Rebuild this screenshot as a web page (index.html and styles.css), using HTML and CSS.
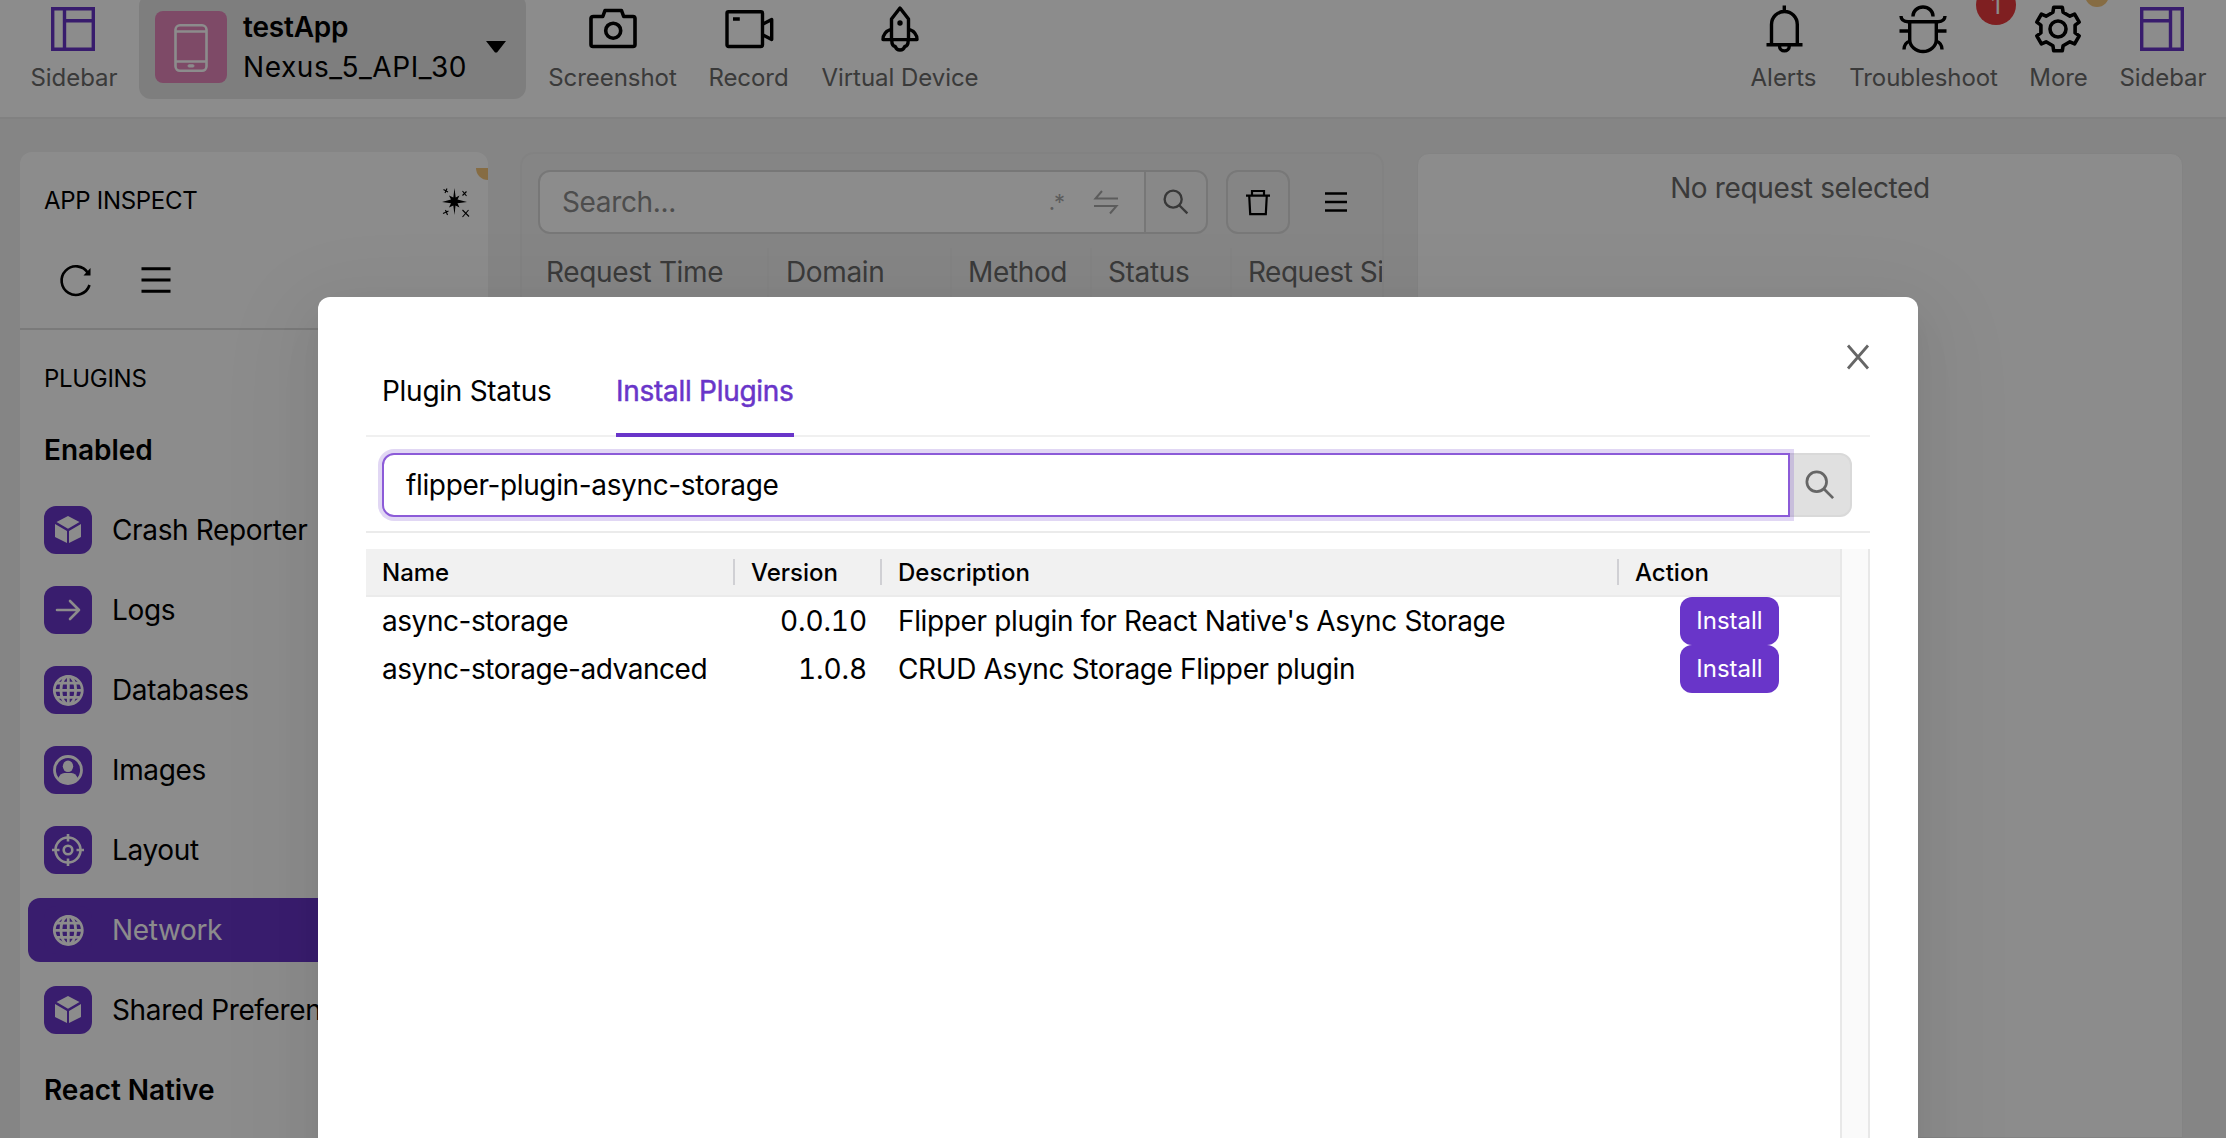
FILE: index.html
```html
<!DOCTYPE html>
<html lang="en">
<head>
<meta charset="utf-8">
<title>Flipper</title>
<link rel="stylesheet" href="styles.css">
</head>
<body>
<svg class="defs" width="0" height="0">
  <symbol id="globe" viewBox="0 0 48 48"><g fill="none" stroke="#fff" stroke-width="2.8"><circle cx="24.3" cy="24.3" r="14"/><ellipse cx="24.3" cy="24.3" rx="7.4" ry="14"/><path d="M24.3 10.500v28M10.500 24.300h28M13 17.200h22.600M13 31.400h22.600"/></g></symbol>
  <symbol id="cube" viewBox="0 0 48 48"><path fill="#fff" d="M24 10l11.500 6L24 22.800 12.500 16zM11 18l12 7v12l-12-6zM37 18l-12 7v12l12-6z"/></symbol>
  <symbol id="glass" viewBox="0 0 32 32"><g fill="none" stroke="#666" stroke-width="2.900"><circle cx="12.500" cy="12.500" r="10.500"/><path d="M20 20l10 10"/></g></symbol>
</svg>
<div class="app">
  <header class="toolbar">
    <div class="tool side"><svg viewBox="0 0 48 48" fill="none" stroke="#6733c6" stroke-width="3.400"><path d="M3.700 3.700h40.600v40.600H3.700zM15.500 3.700v40.600M15.500 15.700h28.800"/></svg><span>Sidebar</span></div>
    <div class="device">
      <div class="device-icon"><svg viewBox="0 0 72 72" fill="none" stroke="#fff" stroke-width="2.600"><rect x="20.500" y="14.300" width="31" height="45.500" rx="4.500"/><path d="M21 20.500h30M21 50.500h30"/><rect x="33" y="53.800" width="6" height="2.200" rx="1" fill="#fff" stroke-width="1"/></svg></div>
      <div class="device-text"><b>testApp</b><span>Nexus_5_API_30</span></div>
      <svg class="caret" viewBox="0 0 20 12"><path d="M0 0h20L11 11.500h-2z"/></svg>
    </div>
    <div class="tool shot"><svg viewBox="0 0 48 48" fill="none" stroke="#000" stroke-width="3.600" stroke-linejoin="round"><path d="M4.500 11.500h9.300l2.200-6h16.500l2.200 6H44q2 0 2 2v26q0 2-2 2H4q-2 0-2-2v-26q0-2 2.500-2z"/><circle cx="24.200" cy="25.700" r="7.500"/></svg><span>Screenshot</span></div>
    <div class="tool rec"><svg viewBox="0 0 48 48" fill="none" stroke="#000" stroke-width="3.400" stroke-linejoin="round"><rect x="2" y="6.700" width="35.500" height="34.800" rx="1.500"/><path d="M8 14h6.800M38 19l8.700-4.500v20L38 30"/></svg><span>Record</span></div>
    <div class="tool virt"><svg viewBox="0 0 48 48" fill="none" stroke="#000" stroke-width="3.400" stroke-linejoin="round"><path d="M24 3l8.500 11v20.600h-17V14zM15.500 24Q7 27 7 34.600h34Q41 27 32.500 24M15.800 35.500q0 5.500 3.500 6 1 3.500 4.700 3.500t4.700-3.500q3.500-.5 3.500-6"/><circle cx="24" cy="18" r="2.700" fill="#000" stroke="none"/></svg><span>Virtual Device</span></div>
    <div class="grow"></div>
    <div class="tool alert"><svg viewBox="0 0 48 48" fill="none" stroke="#000" stroke-width="3.400"><path d="M24.300 0.500v6M11.500 39V19.500a12.900 13 0 0 1 25.800 0V39M6.500 39.700h36M19.500 41a4.900 4.900 0 0 0 9.800 0"/></svg><span>Alerts</span></div>
    <div class="tool bug"><svg viewBox="0 0 48 48" fill="none" stroke="#000" stroke-width="3.400"><path d="M14 11.500V11a10 9 0 0 1 20 0v.5M8 16.700h32M2 11q.2 5.500 7 5.700M46 11q-.2 5.500-7 5.700M10.700 17v17.500a13.300 12 0 0 0 26.600 0V17M.5 26h9M38.500 26h9M11 36q-6 2-6 8.500M37 36q6 2 6 8.500"/></svg><span>Troubleshoot</span><i class="badge">1</i></div>
    <div class="tool more"><svg viewBox="0 0 48 48" fill="none" stroke="#000" stroke-width="3.600" stroke-linejoin="round"><path d="M18.900 7.300L19.700 2.200H28.300L29.100 7.300 35.900 11.200 40.600 9.100 45.200 17.100 41.100 20.100V27.900L45.200 30.900 40.600 38.900 35.900 36.800 29.100 40.700 28.300 45.800H19.700L18.900 40.700 12.100 36.800 7.400 38.900 2.800 30.900 6.900 27.900V20.100L2.800 17.100 7.400 9.100 12.100 11.200z"/><circle cx="24" cy="24" r="8"/></svg><span>More</span><i class="dot"></i></div>
    <div class="tool side"><svg viewBox="0 0 48 48" fill="none" stroke="#6733c6" stroke-width="3.400"><path d="M3.700 3.700h40.600v40.600H3.700zM32.500 3.700v40.600M32.500 15.700H3.700"/></svg><span>Sidebar</span></div>
  </header>
  <main class="main">
    <aside class="panel nav">
      <div class="nav-top">
        <div class="nav-title"><span>APP INSPECT</span>
          <svg class="spark" viewBox="0 0 28 30"><path d="M12.500 0l1.200 9.500 3.800-2-2 4L25 14l-9.500 1.200 2 4.300-4-2-1 9.500-1.200-9.500-4.300 2 2-4.300L0 14l9-2.500-2-4 4.300 2z"/><path d="M1.500 1.500l4.500 2.500M5 .5L3 5M20.500 3l4 5M24.500 3.500L20.500 7.500M1 25.500l5.500-2.500M3.500 22l2 5M20.500 22l6.500 6.500M26.500 22l-6 7" stroke="#000" stroke-width="1.100"/></svg>
        </div>
        <i class="corner"></i>
        <div class="nav-tools">
          <svg viewBox="0 0 32 32" fill="none" stroke="#000" stroke-width="2.600"><path d="M29.500 21A14.300 14.300 0 1 1 28 9"/><path d="M30.500 4v7.500h-7z" fill="#000" stroke="none"/></svg>
          <svg viewBox="0 0 32 32" stroke="#000" stroke-width="3"><path d="M1.500 4.700h29M1.500 16h29M1.500 27.300h29"/></svg>
        </div>
      </div>
      <h3>PLUGINS</h3>
      <h2>Enabled</h2>
      <ul>
        <li><svg viewBox="0 0 48 48"><use href="#cube"/></svg>Crash Reporter</li>
        <li><svg viewBox="0 0 48 48" fill="none" stroke="#fff" stroke-width="2.600" stroke-linecap="round" stroke-linejoin="round"><path d="M13 24h22M26 15l9 9-9 9"/></svg>Logs</li>
        <li><svg viewBox="0 0 48 48"><use href="#globe"/></svg>Databases</li>
        <li><svg viewBox="0 0 48 48"><circle cx="24" cy="24" r="13.500" fill="none" stroke="#fff" stroke-width="2.800"/><ellipse cx="24" cy="20.300" rx="5.200" ry="5.800" fill="#fff"/><path fill="#fff" d="M14 33q2-6 6.500-6h7q4.500 0 6.500 6-4 5-10 5t-10-5z"/></svg>Images</li>
        <li><svg viewBox="0 0 48 48" fill="none" stroke="#fff" stroke-width="2.600"><circle cx="24" cy="24" r="12.500"/><circle cx="24" cy="24" r="4.300"/><path d="M24 8v7.500M24 32.500V40M8 24h7.500M32.500 24H40"/></svg>Layout</li>
        <li class="active"><svg viewBox="0 0 48 48"><use href="#globe"/></svg>Network</li>
        <li><svg viewBox="0 0 48 48"><use href="#cube"/></svg>Shared Preferences</li>
      </ul>
      <h2 class="rn">React Native</h2>
    </aside>
    <section class="requests">
      <div class="filter">
        <div class="field"><span class="ph">Search...</span><span class="regex">.*</span>
          <svg class="swap" viewBox="0 0 24 24" fill="none" stroke="#a8a8a8" stroke-width="2"><path d="M24 8.500H1.500L8 1M0 16h22.500L16 23.500"/></svg></div>
        <div class="go"><svg viewBox="0 0 32 32"><use href="#glass"/></svg></div>
        <div class="trash"><svg viewBox="0 0 24 26" fill="none" stroke="#000" stroke-width="2.200"><path d="M0 6.200h24M6 6V1.500h12V6M3.200 6l1 18.600h15.600l1-18.600"/></svg></div>
        <svg class="burger" viewBox="0 0 22 22" stroke="#000" stroke-width="2.500"><path d="M0 2.500h22M0 11h22M0 19.500h22"/></svg>
      </div>
      <div class="cols"><span>Request Time</span><span>Domain</span><span>Method</span><span>Status</span><span>Request Size</span></div>
    </section>
    <section class="panel detail">No request selected</section>
  </main>
</div>
<div class="mask">
  <div class="modal">
    <svg class="close" viewBox="0 0 22 24" fill="none" stroke="#666" stroke-width="2.800"><path d="M1 .5l20 23M21 .5L1 23.500"/></svg>
    <nav class="tabs"><span>Plugin Status</span><span class="on">Install Plugins</span></nav>
    <div class="search"><div class="input">flipper-plugin-async-storage</div><div class="btn"><svg viewBox="0 0 32 32"><use href="#glass"/></svg></div></div>
    <div class="table">
      <div class="rows">
        <div class="row head"><span>Name</span><span>Version</span><span>Description</span><span>Action</span></div>
        <div class="row"><span class="name">async-storage</span><span class="ver">0.0.10</span><span>Flipper plugin for React Native's Async Storage</span><span class="act"><button>Install</button></span></div>
        <div class="row"><span class="name">async-storage-advanced</span><span class="ver">1.0.8</span><span>CRUD Async Storage Flipper plugin</span><span class="act"><button>Install</button></span></div>
      </div>
      <div class="track"></div>
    </div>
  </div>
</div>
</body>
</html>
```
FILE: styles.css
```css
* { box-sizing: border-box; }
html, body { margin: 0; height: 1138px; overflow: hidden; }
body { position: relative; font: 28px/40px Inter, "Liberation Sans", sans-serif; letter-spacing: -0.36px; color: #000; background: #f2f2f2; }
svg { display: block; flex: none; overflow: visible; }
.defs { position: absolute; }
.app { height: 1138px; display: flex; flex-direction: column; overflow: hidden; }

.toolbar { height: 119px; flex: none; display: flex; align-items: flex-start; padding: 0 4px 0 15px; background: #fff; border-bottom: 2px solid #ececec; }
.tool { position: relative; display: flex; flex-direction: column; align-items: center; gap: 7px; padding-top: 5px; font-size: 24px; line-height: 36px; letter-spacing: -0.05px; color: #6a6a6a; white-space: nowrap; }
.tool svg { width: 48px; height: 48px; }
.side { width: 118px; }
.side svg { margin-right: 2px; }
.shot { width: 159px; margin-left: 7px; }
.rec { width: 111px; margin-left: 1px; }
.virt { width: 192px; }
.alert { width: 101px; }
.bug { width: 179px; }
.bug svg { margin-right: 1px; }
.more { width: 91px; }
.more svg { margin-right: 1px; }
.grow { flex: 1; }
.badge { position: absolute; left: 142px; top: -15px; width: 40px; height: 40px; border-radius: 50%; background: #e83a3c; color: #fff; font-style: normal; text-align: center; line-height: 41px; }
.dot { position: absolute; left: 72px; top: -17px; width: 24px; height: 24px; border-radius: 50%; background: #f5c57b; }
.device { display: flex; align-items: center; width: 387px; height: 105px; margin: -6px 0 0 6px; padding: 0 20px 0 16px; border-radius: 12px; background: #e6e6e6; }
.device-icon { width: 72px; height: 72px; border-radius: 8px; background: #e587bc; flex: none; }
.device-text { display: flex; flex-direction: column; width: 243px; padding-left: 16px; letter-spacing: 0.58px; }
.device b { font-weight: 600; letter-spacing: -0.2px; }
.caret { width: 20px; height: 12px; margin-left: 16px; }

.main { flex: 1; display: flex; align-items: stretch; padding: 33px 43px 0 20px; min-height: 0; }
.panel { background: #fff; border-radius: 12px 12px 0 0; }
.nav { width: 468px; overflow: hidden; }
.nav-top { position: relative; height: 178px; border-bottom: 2px solid #dedede; }
.nav-title { display: flex; justify-content: space-between; padding: 31px 18px 0 24px; font-size: 24px; line-height: 36px; letter-spacing: -0.3px; }
.spark { width: 28px; height: 30px; margin-top: 5px; }
.corner { position: absolute; right: 0; top: 16px; width: 12px; height: 12px; border-radius: 0 0 0 12px; background: #f5c57b; }
.nav-tools { display: flex; gap: 48px; padding: 45px 0 0 40px; }
.nav-tools svg { width: 32px; height: 32px; }
.nav h3 { margin: 31px 0 0 24px; font-size: 24px; line-height: 36px; font-weight: 400; letter-spacing: -0.3px; }
.nav h2 { margin: 33px 0 0 24px; font-size: 28px; line-height: 40px; font-weight: 600; letter-spacing: -0.05px; }
.nav ul { list-style: none; margin: 28px 0 0; padding: 0 8px; display: flex; flex-direction: column; gap: 16px; }
.nav li { display: flex; align-items: center; gap: 20px; height: 64px; padding-left: 16px; border-radius: 12px; white-space: nowrap; }
.nav li svg { width: 48px; height: 48px; border-radius: 12px; background: #6935c9; }
.nav li.active { background: #6935c9; color: #fff; }
.nav h2.rn { margin-top: 28px; }

.requests { width: 864px; flex: none; margin-left: 32px; padding-top: 16px; border: 2px solid #ededed; border-radius: 14px 14px 0 0; overflow: hidden; }
.filter { display: flex; align-items: center; height: 64px; margin-left: 16px; }
.field { display: flex; align-items: center; width: 608px; height: 64px; padding: 0 26px 0 22px; background: #fff; border: 2px solid #d9d9d9; border-radius: 12px 0 0 12px; }
.ph { flex: 1; color: #8c8c8c; }
.regex { color: #a8a8a8; font-size: 22px; letter-spacing: -1px; }
.swap { width: 24px; height: 24px; margin-left: 30px; }
.go { width: 64px; height: 64px; margin-left: -2px; display: grid; place-items: center; background: #f8f8f8; border: 2px solid #d9d9d9; border-radius: 0 12px 12px 0; }
.go svg { width: 26px; height: 26px; }
.trash { width: 64px; height: 64px; margin-left: 18px; display: grid; place-items: center; border: 2px solid #dadada; border-radius: 12px; }
.trash svg { width: 24px; height: 27px; }
.burger { width: 22px; height: 22px; margin-left: 35px; }
.cols { display: flex; width: 960px; margin-top: 14px; padding-left: 4px; height: 1000px; color: #6a6a6a; white-space: nowrap; }
.cols span { padding: 4px 0 0 16px; border-right: 2px solid #eee; flex: none; line-height: 40px; }
.cols span:nth-child(1) { width: 243px; padding-left: 20px; }
.cols span:nth-child(2) { width: 183px; padding-left: 17px; }
.cols span:nth-child(3) { width: 140px; }
.cols span:nth-child(4) { width: 140px; }
.cols span:nth-child(5) { border: 0; letter-spacing: -0.5px; }
.detail { flex: 1; margin: 1px 0 0 33px; padding-top: 14px; text-align: center; color: #6a6a6a; border: 1px solid #efefef; }

.mask { position: absolute; inset: 0; overflow: hidden; background: rgba(0,0,0,.45); padding: 297px 0 0 318px; }
.modal { position: relative; width: 1600px; height: 920px; padding: 60px 48px 0; background: #fff; border-radius: 12px; box-shadow: 0 12px 32px -16px rgba(0,0,0,.08), 0 18px 56px rgba(0,0,0,.05), 0 24px 96px 32px rgba(0,0,0,.03); }
.close { position: absolute; left: 1529px; top: 48px; width: 22px; height: 24px; }
.tabs { display: flex; gap: 64px; height: 80px; padding-left: 16px; border-bottom: 2px solid #f0f0f0; letter-spacing: -0.28px; }
.tabs span { height: 80px; padding-top: 14px; width: 170px; white-space: nowrap; }
.tabs .on { width: 178px; color: #6935c9; border-bottom: 4px solid #6935c9; -webkit-text-stroke: 0.5px #6935c9; }
.search { display: flex; height: 96px; padding: 16px 16px 0; border-bottom: 2px solid #ebebeb; }
.input { position: relative; width: 1408px; height: 64px; padding: 10px 22px; background: #fff; border: 2px solid #8c5bd8; border-radius: 12px 0 0 12px; box-shadow: 0 0 0 4px rgba(105,53,201,.2); }
.btn { width: 64px; height: 64px; margin-left: -2px; display: grid; place-items: center; background: #e0e0e0; border: 2px solid #d9d9d9; border-radius: 0 12px 12px 0; }
.btn svg { width: 30px; height: 30px; }
.table { display: flex; height: 700px; margin-top: 16px; }
.rows { width: 1474px; }
.row { display: grid; grid-template-columns: 369px 147px 737px 221px; height: 48px; white-space: nowrap; }
.row span { padding: 4px 16px 0; }
.row .name { letter-spacing: -0.45px; }
.row .ver { text-align: right; font-variant-numeric: tabular-nums; letter-spacing: -0.1px; padding-right: 15px; }
.row .act { padding: 0; text-align: center; }
.row button { display: block; margin: 0 0 0 61px; width: 99px; height: 48px; border: 0; border-radius: 12px; background: #6935c9; color: #fff; font: 24px/46px Inter, sans-serif; padding: 0; }
.head { background: #f1f1f1; border-bottom: 2px solid #ebebeb; align-items: center; font-size: 24px; font-weight: 500; letter-spacing: 0; }
.row.head span { height: 26px; line-height: 28px; padding: 0 16px; border-right: 2px solid #d0d0d4; }
.row.head span:last-child { border: 0; }
.track { width: 30px; background: #fafafa; border: solid #e8e8e8; border-width: 0 2px; }
```
